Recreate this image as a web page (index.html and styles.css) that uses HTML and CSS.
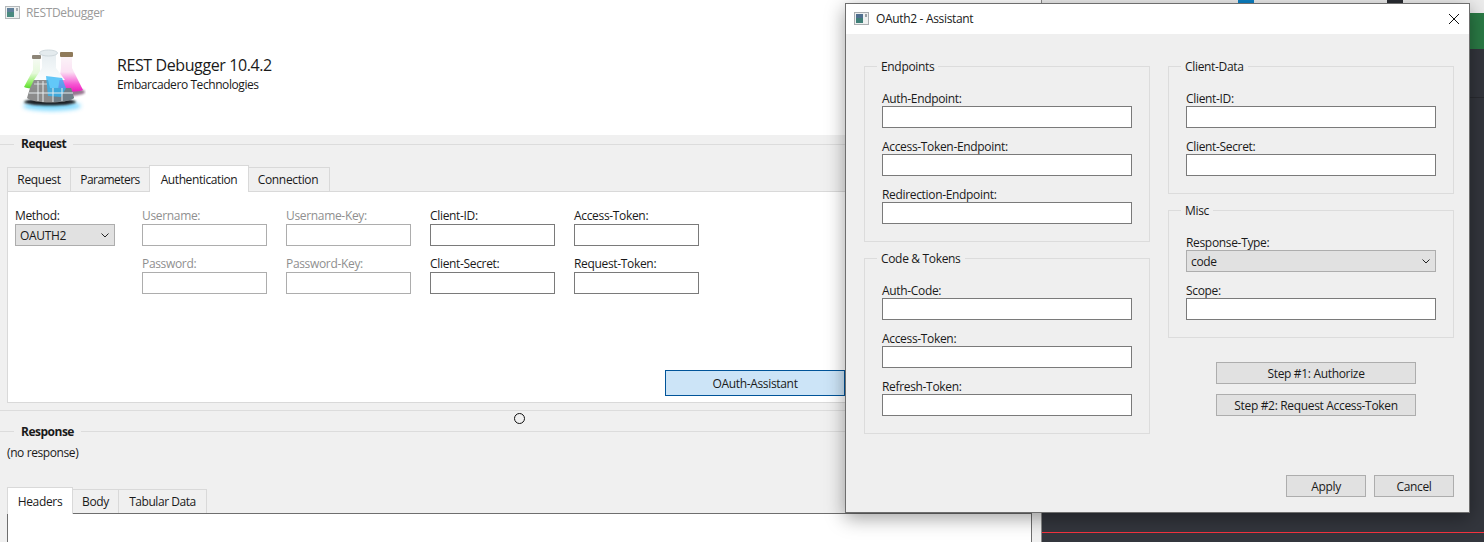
FILE: index.html
```html
<!DOCTYPE html>
<html lang="en">
<head>
<meta charset="utf-8">
<title>REST Debugger</title>
<link rel="stylesheet" href="styles.css">
</head>
<body>
<div class="desktop">
  <div class="ide">
    <div class="ide-top">
      <span class="chip chip-blue"></span>
      <span class="chip chip-dark"></span>
    </div>
    <div class="ide-green"></div>
    <div class="ide-rule"></div>
    <div class="ide-red"></div>
  </div>

  <div class="window main">
    <div class="titlebar">
      <svg class="win-icon" width="15" height="13" viewBox="0 0 15 13"><rect x=".5" y=".5" width="14" height="12" fill="#eef0f0" stroke="#b4b8ba"/><rect x="2" y="2" width="7" height="9" fill="#4a8a80"/><rect x="2" y="2" width="7" height="4" fill="#5f7f9a"/><rect x="11" y="2" width="2" height="3" fill="#a8adb2"/></svg>
      <span class="title-muted">RESTDebugger</span>
    </div>
    <header class="banner">
      <svg class="logo" width="70" height="70" viewBox="16 45 70 70">
        <defs>
          <filter id="b1" x="-40%" y="-60%" width="180%" height="220%"><feGaussianBlur stdDeviation="2.2"/></filter>
          <filter id="b2" x="-40%" y="-60%" width="180%" height="220%"><feGaussianBlur stdDeviation="1.1"/></filter>
          <filter id="b3" x="-10%" y="-10%" width="120%" height="120%"><feGaussianBlur stdDeviation=".6"/></filter>
          <linearGradient id="gG" x1="0" y1="0" x2="0" y2="1"><stop offset="0" stop-color="#f6faf4"/><stop offset=".5" stop-color="#e6f9dc"/><stop offset=".85" stop-color="#86ec55"/><stop offset="1" stop-color="#58d82e"/></linearGradient>
          <linearGradient id="gP" x1="0" y1="0" x2="0" y2="1"><stop offset="0" stop-color="#fbf4f8"/><stop offset=".45" stop-color="#fbe2f4"/><stop offset=".8" stop-color="#f655d2"/><stop offset="1" stop-color="#ec20bd"/></linearGradient>
          <linearGradient id="gC" x1="0" y1="0" x2="0" y2="1"><stop offset="0" stop-color="#e6edf0"/><stop offset="1" stop-color="#fafdfe"/></linearGradient>
        </defs>
        <ellipse cx="52" cy="106" rx="29" ry="5" fill="#39c4ff" opacity=".6" filter="url(#b1)"/>
        <ellipse cx="68" cy="92" rx="17" ry="4" fill="#6a3a60" opacity=".7" filter="url(#b2)"/>
        <ellipse cx="50" cy="102" rx="26" ry="3.500" fill="#1c2026" filter="url(#b2)"/>
        <g filter="url(#b3)">
          <path d="M33 58h7v13l9 16c-6 2-21 2-25 0l9-17z" fill="url(#gG)"/>
          <rect x="32" y="55" width="9" height="4" rx="1" fill="#8d8578"/>
          <path d="M61 56h11v12l11 22c-4 2-19 2-25 0l3-22z" fill="url(#gP)"/>
          <rect x="60" y="52" width="13" height="5" rx="1" fill="#8f7a5a"/>
          <path d="M42 54h14v14l9 12H34l8-12z" fill="url(#gC)"/>
          <ellipse cx="48.500" cy="53" rx="9" ry="3" fill="#e4ebee" stroke="#cfd8dc"/>
          <path d="M34 80h14l2 8H30z" fill="#8e8e8e"/>
          <path d="M30 88h41l3 10c-8 6-40 6-47 0z" fill="#8c8c8c"/>
          <path d="M53 88h18l3 10c-4 3-14 4-21 4z" fill="#6f7f88"/>
          <path d="M46 76l16 2 4 10-5 9-13-1z" fill="#2fb6f5" opacity=".75"/>
          <path d="M29 93h44M38 81v20M43 81v21M53 88v14M62 88v13" stroke="#e6ecef" stroke-width="1" fill="none"/>
          <path d="M34 84h13" stroke="#e6ecef" stroke-width=".8" fill="none"/>
        </g>
      </svg>
      <div class="banner-text">
        <div class="banner-title">REST Debugger 10.4.2</div>
        <div class="banner-sub">Embarcadero Technologies</div>
      </div>
    </header>

    <section class="band band-request">
      <div class="band-legend">Request</div>
    </section>
    <nav class="tabs tabs-request">
      <span class="tab tab-req">Request</span>
      <span class="tab tab-par">Parameters</span>
      <span class="tab tab-auth active">Authentication</span>
      <span class="tab tab-conn">Connection</span>
    </nav>
    <div class="panel">
      <div class="auth-grid">
        <div class="col col-method">
          <div class="cell">
            <label class="lab">Method:</label>
            <div class="combo"><span>OAUTH2</span><svg width="8" height="5" viewBox="0 0 8 5"><path d="M.5.500 4 4 7.500.500" fill="none" stroke="#222"/></svg></div>
          </div>
        </div>
        <div class="col">
          <div class="cell off"><label class="lab">Username:</label><input class="box" disabled></div>
          <div class="cell off"><label class="lab">Password:</label><input class="box" disabled></div>
        </div>
        <div class="col">
          <div class="cell off"><label class="lab">Username-Key:</label><input class="box" disabled></div>
          <div class="cell off"><label class="lab">Password-Key:</label><input class="box" disabled></div>
        </div>
        <div class="col">
          <div class="cell"><label class="lab">Client-ID:</label><input class="box"></div>
          <div class="cell"><label class="lab">Client-Secret:</label><input class="box"></div>
        </div>
        <div class="col">
          <div class="cell"><label class="lab">Access-Token:</label><input class="box"></div>
          <div class="cell"><label class="lab">Request-Token:</label><input class="box"></div>
        </div>
      </div>
      <button class="oauth-btn">OAuth-Assistant</button>
    </div>
    <div class="splitter"><span class="grip"></span></div>
    <section class="band band-response">
      <div class="band-legend legend-response">Response</div>
    </section>
    <div class="no-response">(no response)</div>
    <nav class="tabs tabs-response">
      <span class="tab tab-head active">Headers</span>
      <span class="tab tab-body">Body</span>
      <span class="tab tab-tab">Tabular Data</span>
    </nav>
    <div class="resp-box"></div>
  </div>

  <div class="window dialog">
    <div class="dlg-title">
      <svg class="win-icon" width="15" height="13" viewBox="0 0 15 13"><rect x=".5" y=".5" width="14" height="12" fill="#eef0f0" stroke="#a9adb0"/><rect x="2" y="2" width="7" height="9" fill="#3f7f78"/><rect x="2" y="2" width="7" height="4" fill="#4f6f8f"/><rect x="11" y="2" width="2" height="3" fill="#9aa0a6"/></svg>
      <span class="dlg-name">OAuth2 - Assistant</span>
      <svg class="close" width="10" height="10" viewBox="0 0 10 10"><path d="M0 0 10 10M10 0 0 10" stroke="#111" stroke-width="1" fill="none"/></svg>
    </div>
    <div class="dlg-body">
      <div class="dlg-col">
        <div class="group">
          <div class="legend">Endpoints</div>
          <div class="fields">
            <div class="field"><label class="flab">Auth-Endpoint:</label><input class="box wide"></div>
            <div class="field"><label class="flab">Access-Token-Endpoint:</label><input class="box wide"></div>
            <div class="field"><label class="flab">Redirection-Endpoint:</label><input class="box wide"></div>
          </div>
        </div>
        <div class="group">
          <div class="legend">Code &amp; Tokens</div>
          <div class="fields">
            <div class="field"><label class="flab">Auth-Code:</label><input class="box wide"></div>
            <div class="field"><label class="flab">Access-Token:</label><input class="box wide"></div>
            <div class="field"><label class="flab">Refresh-Token:</label><input class="box wide"></div>
          </div>
        </div>
      </div>
      <div class="dlg-col">
        <div class="group">
          <div class="legend">Client-Data</div>
          <div class="fields">
            <div class="field"><label class="flab">Client-ID:</label><input class="box wide"></div>
            <div class="field"><label class="flab">Client-Secret:</label><input class="box wide"></div>
          </div>
        </div>
        <div class="group">
          <div class="legend">Misc</div>
          <div class="fields">
            <div class="field"><label class="flab">Response-Type:</label>
              <div class="combo wide"><span>code</span><svg width="8" height="5" viewBox="0 0 8 5"><path d="M.5.500 4 4 7.500.500" fill="none" stroke="#222"/></svg></div>
            </div>
            <div class="field"><label class="flab">Scope:</label><input class="box wide"></div>
          </div>
        </div>
        <div class="steps">
          <button class="btn step">Step #1: Authorize</button>
          <button class="btn step">Step #2: Request Access-Token</button>
        </div>
      </div>
    </div>
    <div class="dlg-foot">
      <button class="btn foot">Apply</button>
      <button class="btn foot">Cancel</button>
    </div>
  </div>
</div>
</body>
</html>
```

FILE: styles.css
```css
* { box-sizing: border-box; }
html, body { margin: 0; padding: 0; }
body {
  width: 1484px;
  height: 542px;
  overflow: hidden;
  background: #fff;
  font-family: "Open Sans", "Noto Sans", sans-serif;
  font-size: 12px;
  letter-spacing: -0.33px;
  color: #1a1a1a;
}
.desktop { position: relative; width: 1484px; height: 542px; overflow: hidden; }

/* Background IDE window */
.ide {
  position: absolute;
  left: 1042px;
  top: 0;
  width: 442px;
  height: 542px;
  background: #33363d;
  display: flex;
  flex-direction: column;
}
.ide-top { height: 13px; background: #ececec; display: flex; align-items: flex-start; flex: none; }
.chip { height: 3px; width: 16px; display: block; }
.chip-blue { background: #0c80c4; margin-left: 196px; }
.chip-dark { background: #2b2d33; margin-left: 133px; }
.ide-green { height: 36px; width: 15px; background: #2a7a45; align-self: flex-end; flex: none; }
.ide-rule { height: 1px; width: 15px; background: #292b30; align-self: flex-end; margin-top: 48px; flex: none; }
.ide-red { height: 1px; background: #f5333f; margin-top: auto; margin-bottom: 9px; flex: none; }

/* Main window */
.window { position: absolute; }
.main {
  left: 0;
  top: 0;
  width: 1042px;
  height: 542px;
  background: #f0f0f0;
  display: flex;
  flex-direction: column;
  overflow: hidden;
  border-right: 1px solid #8a8a8a;
}
.titlebar {
  flex: none;
  height: 28px;
  background: #fff;
  display: flex;
  align-items: center;
  padding: 0 0 3px 5px;
}
.title-muted { margin-left: 6px; color: #9a9a9a; line-height: 14px; }
.win-icon { flex: none; display: block; }
.banner {
  flex: none;
  height: 107px;
  background: #fff;
  display: flex;
  align-items: flex-start;
  padding: 17px 0 0 16px;
}
.logo { flex: none; display: block; }
.banner-text { margin: 10px 0 0 31px; }
.banner-title { font-size: 16px; line-height: 20px; letter-spacing: -0.4px; }
.banner-sub { line-height: 18px; margin-top: 1px; letter-spacing: -0.42px; }

.band { flex: none; border-top: 1px solid #dcdcdc; height: 0; }
.band-request { margin-top: 9px; }
.band-legend {
  display: inline-block;
  margin: -10px 0 0 14px;
  padding: 0 7px;
  height: 17px;
  line-height: 17px;
  font-weight: 700;
  letter-spacing: -0.5px;
  background: #f0f0f0;
  vertical-align: top;
}
.legend-response { margin-top: -9px; }

.tabs { flex: none; display: flex; align-items: flex-end; margin-left: 7px; position: relative; z-index: 1; }
.tabs-request { margin-top: 19px; height: 27px; }
.tab {
  height: 24px;
  line-height: 24px;
  text-align: center;
  background: #f0f0f0;
  border: 1px solid #d9d9d9;
  border-bottom: 0;
  margin-left: -1px;
  flex: none;
}
.tab:first-child { margin-left: 0; }
.tab.active { height: 27px; line-height: 28px; background: #fff; margin-bottom: -1px; position: relative; z-index: 1; }
.tab-req { width: 64px; }
.tab-par { width: 80px; letter-spacing: -0.55px; }
.tab-auth { width: 100px; letter-spacing: -0.4px; }
.tab-conn { width: 82px; padding-right: 2px; }
.tab-head { width: 66px; }
.tab-body { width: 47px; }
.tab-tab { width: 89px; letter-spacing: -0.45px; }

.panel {
  flex: none;
  width: 1025px;
  height: 212px;
  margin-left: 7px;
  background: #fff;
  border: 1px solid #d9d9d9;
  padding: 16px 0 6px 7px;
  display: flex;
  flex-direction: column;
}
.auth-grid { display: flex; column-gap: 19px; }
.col { width: 125px; display: flex; flex-direction: column; row-gap: 10px; }
.col-method { width: 100px; margin-right: 8px; }
.lab { display: block; height: 16px; line-height: 15px; }
.cell.off .lab { color: #8f8f8f; }
.box {
  display: block;
  width: 125px;
  height: 22px;
  border: 1px solid #7a7a7a;
  background: #fff;
  padding: 0;
  margin: 0;
  border-radius: 0;
  outline: 0;
}
.cell.off .box { border-color: #adadad; }
.combo {
  display: flex;
  align-items: center;
  justify-content: space-between;
  width: 100px;
  height: 22px;
  background: #e1e1e1;
  border: 1px solid #adadad;
  padding: 0 5px 0 4px;
}
.oauth-btn {
  margin: auto 0 0 650px;
  width: 180px;
  height: 26px;
  flex: none;
  background: #cce4f7;
  border: 1px solid #005499;
  padding: 0;
  font: inherit;
  letter-spacing: inherit;
  color: #1a1a1a;
}
.splitter {
  flex: none;
  margin-top: 7px;
  height: 21px;
  border-top: 1px solid #dcdcdc;
  display: flex;
  align-items: flex-start;
  padding: 2px 0 0 514px;
}
.grip { width: 11px; height: 11px; border: 1px solid #111; border-radius: 50%; display: block; background: #f0f0f0; }
.no-response { flex: none; margin: 12px 0 0 7px; line-height: 18px; letter-spacing: -0.4px; }
.tabs-response { margin-top: 24px; height: 27px; }
.resp-box {
  flex: none;
  width: 1025px;
  height: 60px;
  margin-left: 7px;
  background: #fff;
  border: 1px solid #6e6e6e;
}

/* Dialog */
.dialog {
  left: 845px;
  top: 3px;
  width: 625px;
  height: 510px;
  background: #efefef;
  border: 1px solid #6e6e6e;
  box-shadow: 0 5px 18px rgba(0, 0, 0, .38);
  display: flex;
  flex-direction: column;
}
.dlg-title {
  flex: none;
  height: 30px;
  background: #fff;
  display: flex;
  align-items: center;
  padding: 0 10px 2px 8px;
}
.dlg-name { margin-left: 7px; flex: 1; }
.close { flex: none; display: block; margin-top: 2px; }
.dlg-body { flex: none; display: flex; column-gap: 18px; padding: 32px 0 0 18px; }
.dlg-col { width: 286px; display: flex; flex-direction: column; row-gap: 16px; }
.group { border: 1px solid #dcdcdc; padding: 0 17px 17px 17px; }
.legend {
  display: table;
  margin: -8px 0 0 -5px;
  padding: 0 4px;
  height: 17px;
  line-height: 16px;
  background: #efefef;
}
.fields { margin-top: 15px; display: flex; flex-direction: column; row-gap: 11px; }
.flab { display: block; height: 15px; line-height: 16px; }
.wide { width: 250px; }
.steps { display: flex; flex-direction: column; row-gap: 10px; padding: 8px 0 0 48px; }
.btn {
  height: 22px;
  background: #e1e1e1;
  border: 1px solid #adadad;
  padding: 0;
  font: inherit;
  letter-spacing: inherit;
  color: #1a1a1a;
  border-radius: 0;
}
.step { width: 200px; }
.dlg-foot { flex: none; display: flex; justify-content: flex-end; column-gap: 8px; margin-top: auto; padding: 0 15px 15px 0; }
.foot { width: 80px; line-height: 22px; }
```
